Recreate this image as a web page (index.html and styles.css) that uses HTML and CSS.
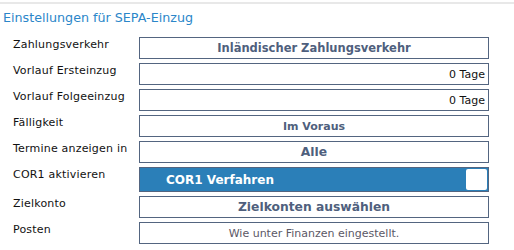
FILE: index.html
```html
<!DOCTYPE html>
<html>
<head>
<meta charset="utf-8">
<link rel="stylesheet" href="styles.css">
</head>
<body>
<div class="panel">
  <h2 class="title">Einstellungen für SEPA-Einzug</h2>
  <div class="form">
    <div class="row">
      <div class="label">Zahlungsverkehr</div>
      <div class="field select">Inländischer Zahlungsverkehr</div>
    </div>
    <div class="row">
      <div class="label">Vorlauf Ersteinzug</div>
      <div class="field input">0 Tage</div>
    </div>
    <div class="row">
      <div class="label">Vorlauf Folgeeinzug</div>
      <div class="field input">0 Tage</div>
    </div>
    <div class="row">
      <div class="label">Fälligkeit</div>
      <div class="field select small">Im Voraus</div>
    </div>
    <div class="row">
      <div class="label">Termine anzeigen in</div>
      <div class="field select large">Alle</div>
    </div>
    <div class="row">
      <div class="label">COR1 aktivieren</div>
      <div class="field toggle"><span class="toggle-text">COR1 Verfahren</span><span class="check"></span></div>
    </div>
    <div class="row">
      <div class="label">Zielkonto</div>
      <div class="field select large">Zielkonten auswählen</div>
    </div>
    <div class="row">
      <div class="label">Posten</div>
      <div class="field info">Wie unter Finanzen eingestellt.</div>
    </div>
  </div>
</div>
</body>
</html>
```

FILE: styles.css
```css
html, body {
  margin: 0;
  padding: 0;
  background: #ffffff;
}
body {
  font-family: "DejaVu Sans", Verdana, sans-serif;
  font-size: 11px;
  color: #111;
}
.panel {
  border-top: 2px solid #e8e8e8;
  margin-top: 2px;
}
.title {
  margin: 0;
  padding: 6px 0 0 3px;
  height: 33px;
  box-sizing: border-box;
  font-size: 12.7px;
  font-weight: normal;
  color: #2b86c9;
  line-height: 16px;
}
.form {
  padding: 0 0 0 13px;
}
.row {
  display: flex;
  align-items: flex-start;
  margin-bottom: 4px;
}
.label {
  width: 126px;
  flex: none;
  line-height: 14px;
  padding-top: 1px;
  color: #111;
  letter-spacing: 0.2px;
}
.field {
  width: 350px;
  height: 22px;
  box-sizing: border-box;
  border: 1.5px solid #536580;
  display: flex;
  align-items: center;
}
.select {
  justify-content: center;
  font-weight: bold;
  color: #4f5f7d;
  font-size: 11.5px;
}
.select.small {
  font-size: 11px;
}
.select.large {
  font-size: 12.3px;
}
.input {
  justify-content: flex-end;
  padding-right: 3px;
  color: #111;
}
.info {
  justify-content: center;
  color: #5b5866;
}
.toggle {
  height: 25px;
  background: #2b7fb8;
  color: #fff;
  font-weight: bold;
  font-size: 12px;
  justify-content: space-between;
  padding: 0 1px 0 26px;
}
.check {
  width: 21px;
  height: 21px;
  background: #fff;
  border-radius: 2px;
}
```
